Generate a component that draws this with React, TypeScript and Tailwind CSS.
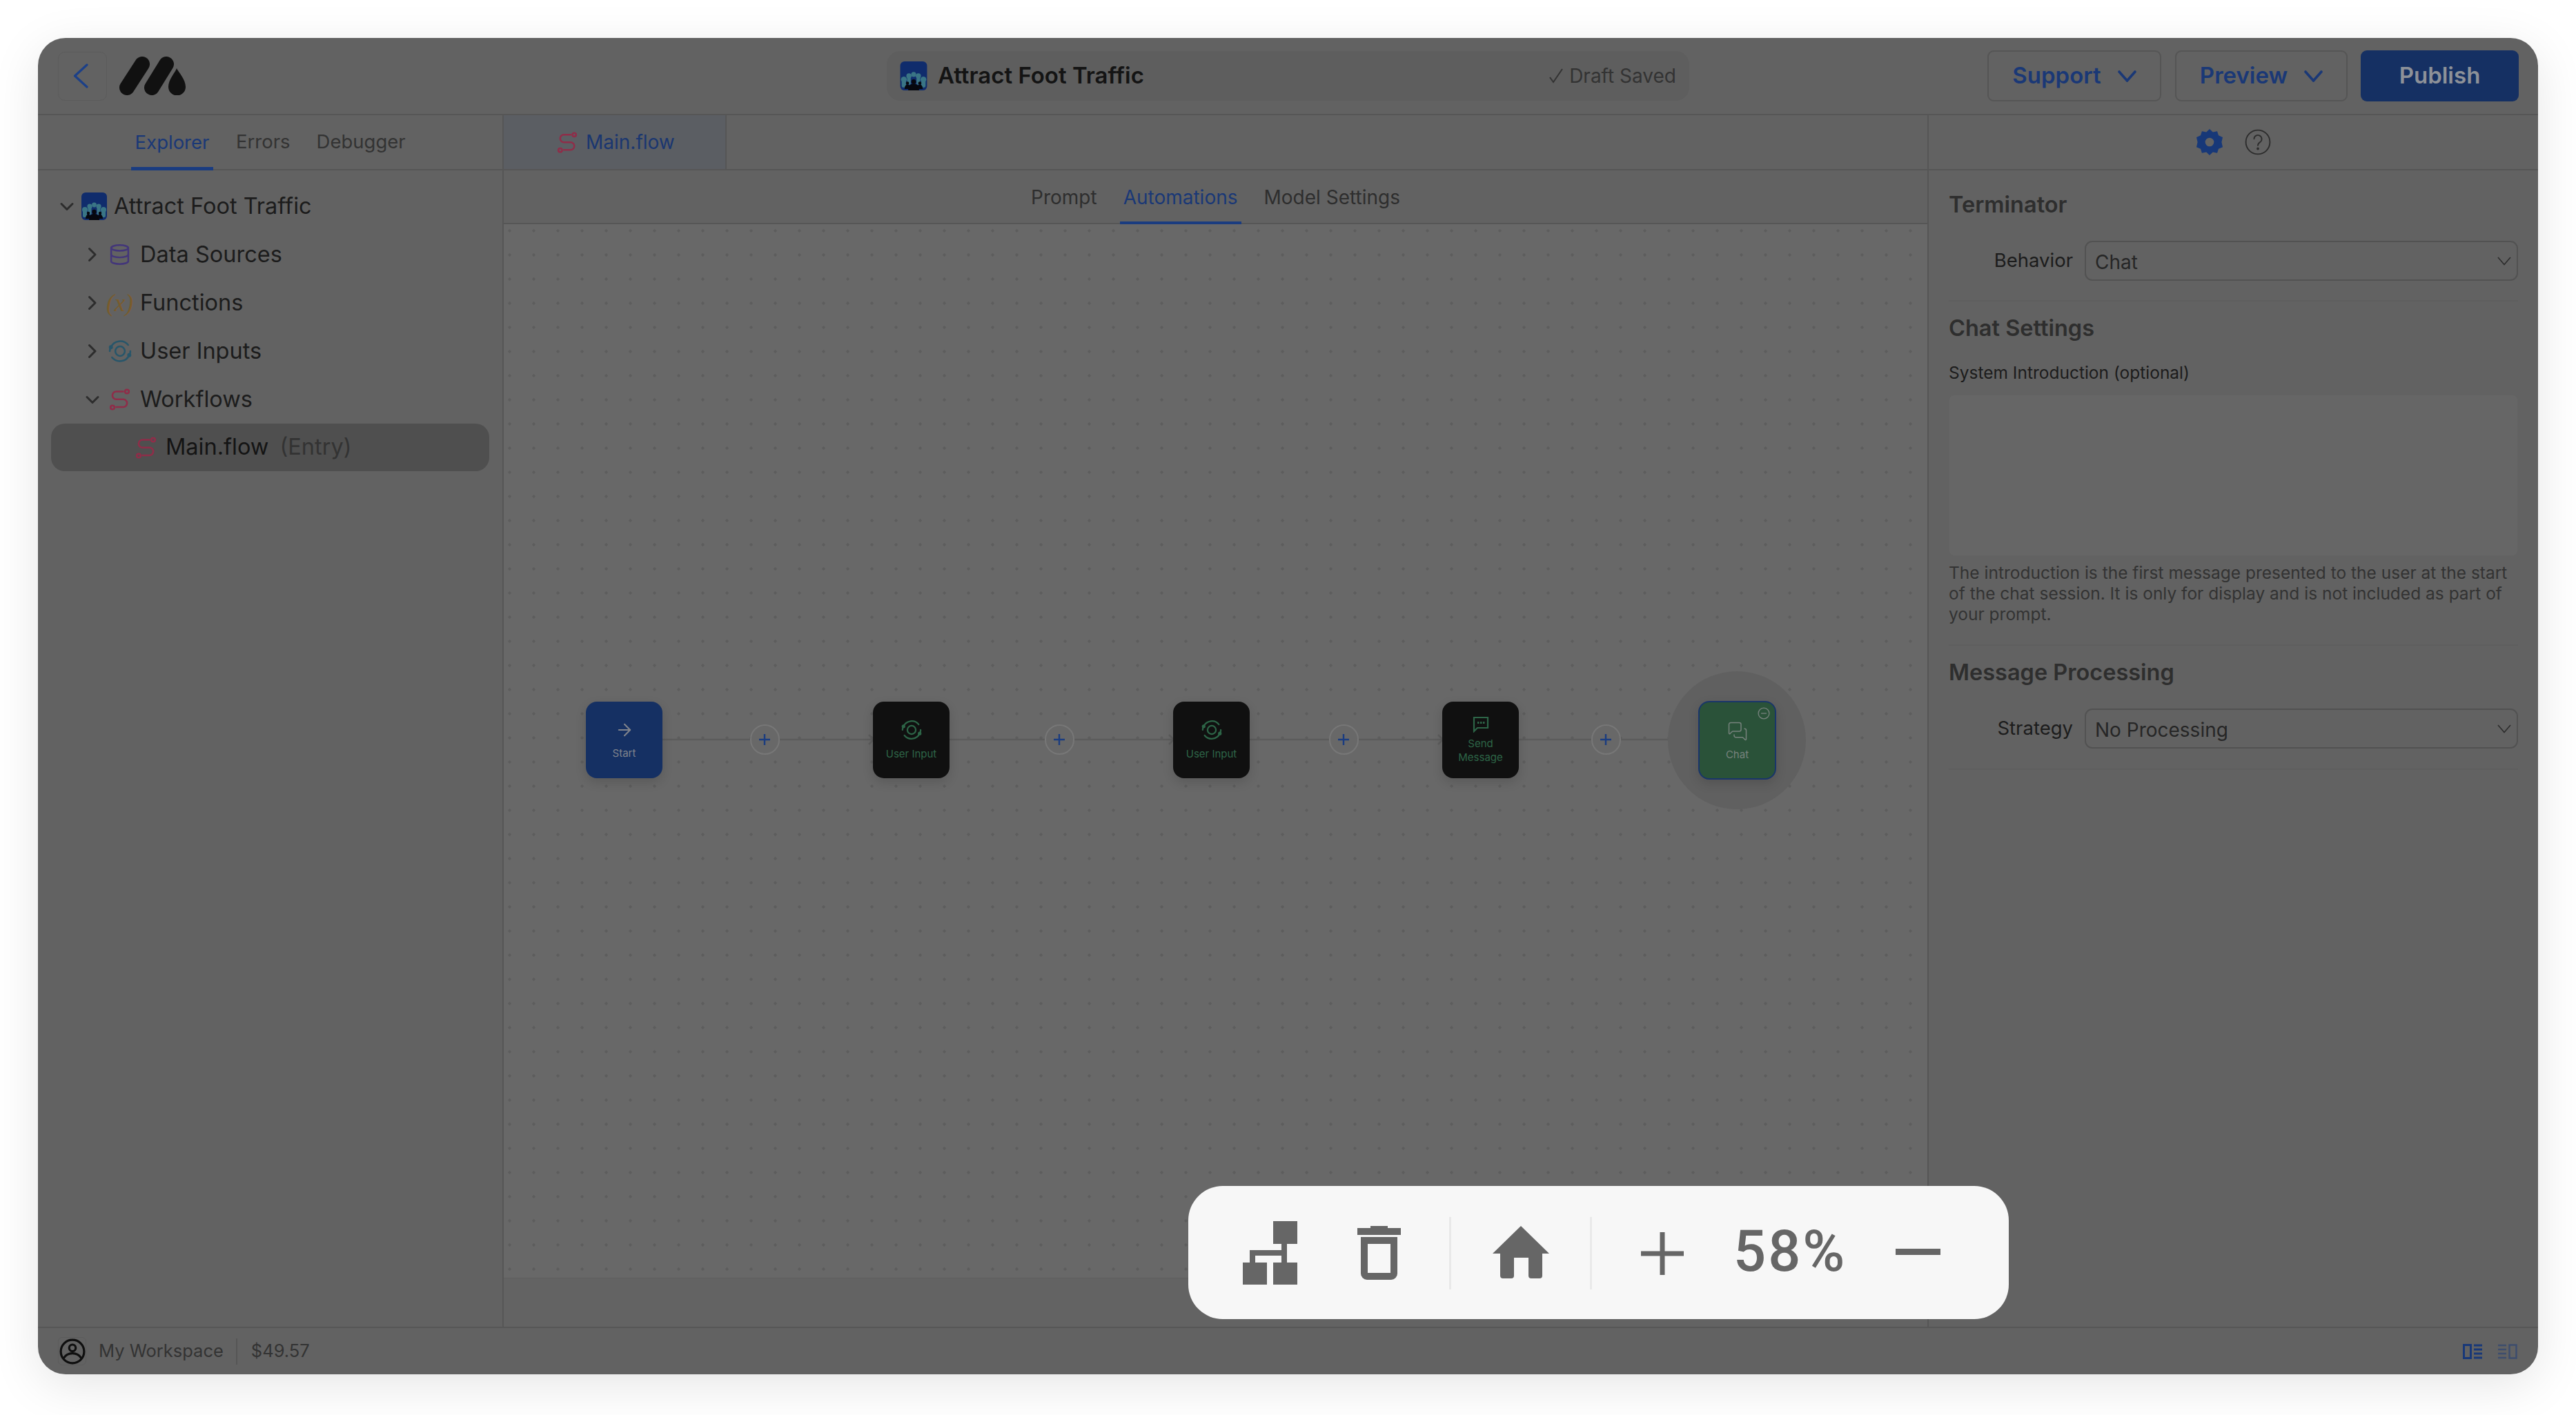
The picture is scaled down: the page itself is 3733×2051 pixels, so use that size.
import React from "react";
import { ArrowRight, Database, MessagesSquare } from "lucide-react";

const font = { fontFamily: "Inter, 'Liberation Sans', sans-serif" };

function Chevron({ dir, className = "" }: { dir: "down" | "right"; className?: string }) {
  return (
    <svg viewBox="0 0 32 32" fill="none" className={className} stroke="currentColor" strokeWidth="3" strokeLinecap="round" strokeLinejoin="round">
      {dir === "down" ? <path d="M8 12.500l8 8 8-8" /> : <path d="M11.500 7.500l8.500 8.500-8.500 8.500" />}
    </svg>
  );
}

function FlowIcon({ className = "" }: { className?: string }) {
  return (
    <svg viewBox="0 0 30 32" fill="none" className={className} stroke="currentColor" strokeWidth="2.600">
      <circle cx="25.500" cy="4.500" r="2.800" />
      <circle cx="4.500" cy="27.500" r="2.800" />
      <path d="M20 4.500H10a5.600 5.600 0 0 0 0 11.200h10a5.600 5.600 0 0 1 0 11.300H10" strokeLinecap="round" />
    </svg>
  );
}

function InputIcon({ className = "" }: { className?: string }) {
  return (
    <svg viewBox="0 0 32 32" fill="none" className={className} stroke="currentColor" strokeWidth="2.400" strokeLinecap="round">
      <circle cx="16" cy="16" r="6.500" />
      <path d="M3.500 10.500A14 14 0 0 1 27 7.500" />
      <path d="M28.500 21.500A14 14 0 0 1 5 24.500" />
      <path d="M2 16a14 14 0 0 1 .6-3.800" />
      <path d="M30 16a14 14 0 0 1-.6 3.800" />
      <circle cx="3.500" cy="10.500" r="1.600" fill="currentColor" />
      <circle cx="28.500" cy="21.500" r="1.600" fill="currentColor" />
    </svg>
  );
}

function AppIcon({ className = "" }: { className?: string }) {
  return (
    <svg viewBox="0 0 37 40" className={className}>
      <rect width="37" height="40" rx="6" fill="#102c6c" />
      <g fill="#3a7585">
        <circle cx="5" cy="25" r="4" />
        <circle cx="32" cy="25" r="4" />
        <circle cx="12" cy="20" r="3.600" />
        <circle cx="25" cy="20" r="3.600" />
        <circle cx="18.500" cy="18" r="3.400" />
        <rect x="2" y="26" width="6" height="10" rx="2" />
        <rect x="29" y="26" width="6" height="10" rx="2" />
        <rect x="9.500" y="22" width="5" height="10" />
        <rect x="22.500" y="22" width="5" height="10" />
      </g>
      <g fill="#06080f">
        <circle cx="18.500" cy="28" r="3.200" />
        <path d="M11 40c0-7 3-9 7.500-9s7.500 2 7.500 9z" />
        <circle cx="10" cy="30" r="2.200" />
        <circle cx="27" cy="30" r="2.200" />
        <path d="M6 38c0-4 2-6 4-6s4 2 4 6z" />
        <path d="M23 38c0-4 2-6 4-6s4 2 4 6z" />
      </g>
    </svg>
  );
}

function Logo() {
  return (
    <svg viewBox="0 0 96 56" className="w-[96px] h-[56px]" fill="#111">
      <line x1="11" y1="45" x2="33" y2="11" stroke="#111" strokeWidth="22" strokeLinecap="round" />
      <line x1="47" y1="45" x2="68" y2="11" stroke="#111" strokeWidth="22" strokeLinecap="round" />
      <path d="M83 17c3 6 13 16 13 27a12.500 12.500 0 0 1-25 0c0-11 10-21 12-27z" />
    </svg>
  );
}

function TreeRow({ indent, open, icon, textMargin = 11, children }: { indent: number; open?: boolean; icon: React.ReactNode; textMargin?: number; children: React.ReactNode }) {
  return (
    <div className="flex items-center h-[70px]" style={{ paddingLeft: indent }}>
      <Chevron dir={open ? "down" : "right"} className="w-[32px] h-[32px] text-[#2d2d2d] shrink-0" />
      <div className="w-[37px] ml-[5px] flex justify-center shrink-0">{icon}</div>
      <span className="text-[32.500px] leading-none text-[#1c1c1c] whitespace-nowrap" style={{ marginLeft: textMargin }}>
        {children}
      </span>
    </div>
  );
}

function Select({ label, value }: { label: string; value: string }) {
  return (
    <div className="flex items-center">
      <div className="w-[180px] text-right text-[27.500px] text-[#1c1c1c] whitespace-nowrap">{label}</div>
      <div className="ml-[17px] flex-1 h-[58px] rounded-[11px] border-2 border-[#525252] flex items-center pl-[13px] pr-[8px]">
        <span className="flex-1 text-[28px] text-[#262626] pt-[3px]">{value}</span>
        <svg viewBox="0 0 20 13" className="w-[20px] h-[13px]" fill="none" stroke="#2d2d2d" strokeWidth="1.600">
          <path d="M1 1l9 10.500L19 1" />
        </svg>
      </div>
    </div>
  );
}

function HeaderButton({ label }: { label: string }) {
  return (
    <div className="h-[74px] rounded-[9px] border-2 border-[#555555] flex items-center justify-center gap-[24px] text-[#1a3876] text-[33px] font-semibold">
      <span>{label}</span>
      <svg viewBox="0 0 27 17" className="w-[27px] h-[17px]" fill="none" stroke="currentColor" strokeWidth="3.600" strokeLinecap="round">
        <path d="M2 2l11.500 13L25 2" />
      </svg>
    </div>
  );
}

function FlowNode({ x, label, icon, kind }: { x: number; label: string[]; icon: React.ReactNode; kind: "start" | "dark" }) {
  const cls = kind === "start" ? "bg-[#153063] text-[#80848c]" : "bg-[#101010] text-[#2d6547]";
  return (
    <div
      className={`absolute top-[692px] w-[111px] h-[111px] rounded-[16px] shadow-[0_6px_16px_rgba(0,0,0,0.14)] flex flex-col items-center justify-center ${cls}`}
      style={{ left: x }}
    >
      {icon}
      <div className={`text-[15px] leading-[20px] text-center ${label.length > 1 ? "mt-[6px]" : "mt-[10px]"}`}>
        {label.map((l) => (
          <div key={l}>{l}</div>
        ))}
      </div>
    </div>
  );
}

function PlusCircle({ cx }: { cx: number }) {
  return (
    <div
      className="absolute top-[725px] w-[43px] h-[44px] rounded-full border-2 border-[#777777] bg-[#686868] flex items-center justify-center"
      style={{ left: cx - 21.5 }}
    >
      <svg viewBox="0 0 18 18" className="w-[18px] h-[18px]" stroke="#1a3c80" strokeWidth="2.400">
        <path d="M9 1v16M1 9h16" />
      </svg>
    </div>
  );
}

const edges: [number, number][] = [
  [230, 535],
  [646, 970],
  [1081, 1360],
  [1471, 1731],
];

export default function App() {
  return (
    <div className="w-[3733px] h-[2051px] bg-white p-[55px] overflow-hidden" style={font}>
      <div className="w-[3623px] h-[1937px] rounded-[40px] bg-[#626262] shadow-[0_16px_70px_rgba(0,0,0,0.10)] overflow-hidden flex flex-col">
        {/* header */}
        <div className="h-[112px] shrink-0 border-b-2 border-[#565656] flex items-center relative">
          <div className="ml-[29px] w-[71px] h-[71px] rounded-[10px] border border-[#5c5c5c] flex items-center pl-[21px]">
            <svg viewBox="0 0 22 36" className="w-[22px] h-[36px]" fill="none" stroke="#1c4088" strokeWidth="3.200" strokeLinecap="round" strokeLinejoin="round">
              <path d="M20 2L2.500 18 20 34" />
            </svg>
          </div>
          <div className="ml-[18px]">
            <Logo />
          </div>
          <div className="ml-[1016px] w-[1163px] h-[72px] rounded-[20px] bg-[#5e5e5e] flex items-center pl-[18px] pr-[19px]">
            <AppIcon className="w-[42px] h-[42px]" />
            <span className="ml-[14px] text-[33px] font-semibold text-[#141414]">Attract Foot Traffic</span>
            <div className="ml-auto flex items-center text-[28px] text-[#333333]">
              <svg viewBox="0 0 22 24" className="w-[22px] h-[24px] mr-[8px]" fill="none" stroke="#333333" strokeWidth="2">
                <path d="M2 14l5 7L20 2" />
              </svg>
              <span>Draft Saved</span>
            </div>
          </div>
          <div className="ml-[432px] flex items-center">
            <div className="w-[252px]">
              <HeaderButton label="Support" />
            </div>
            <div className="w-[250px] ml-[20px]">
              <HeaderButton label="Preview" />
            </div>
            <div className="w-[229px] ml-[19px] h-[74px] rounded-[9px] bg-[#153063] text-[#8d9198] text-[33px] font-semibold flex items-center justify-center">
              Publish
            </div>
          </div>
        </div>

        {/* body */}
        <div className="flex-1 flex min-h-0">
          {/* left */}
          <div className="w-[675px] shrink-0 border-r-2 border-[#565656] flex flex-col">
            <div className="h-[80px] border-b-2 border-[#565656] flex pl-[135px] text-[27.500px] text-[#333333]">
              <div className="w-[119px] h-[80px] border-b-[5px] border-[#1a3c80] text-[#1a3876] flex items-center justify-center pt-[5px] -mb-[2px]">Explorer</div>
              <div className="ml-[33px] h-[78px] flex items-center">Errors</div>
              <div className="ml-[38px] h-[78px] flex items-center">Debugger</div>
            </div>
            <div className="pt-[17px]">
              <TreeRow indent={26} open textMargin={10} icon={<AppIcon className="w-[37px] h-[40px]" />}>
                Attract Foot Traffic
              </TreeRow>
              <TreeRow indent={63} icon={<Database className="w-[33px] h-[36px] text-[#43367a]" strokeWidth={1.800} />}>
                Data Sources
              </TreeRow>
              <TreeRow
                indent={63}
                icon={
                  <span className="text-[35px] leading-none text-[#7a5c2c] italic" style={{ fontFamily: "'Liberation Serif', serif" }}>
                    (x)
                  </span>
                }
              >
                Functions
              </TreeRow>
              <TreeRow indent={63} icon={<InputIcon className="w-[34px] h-[34px] text-[#28566a]" />}>
                User Inputs
              </TreeRow>
              <TreeRow indent={63} open icon={<FlowIcon className="w-[31px] h-[32px] text-[#8f2d49]" />}>
                Workflows
              </TreeRow>
              <div className="mx-[19px] h-[69px] rounded-[20px] bg-[#4f4f4f] flex items-center pl-[122px]">
                <FlowIcon className="w-[31px] h-[32px] text-[#8f2d49]" />
                <span className="ml-[13px] text-[32.500px] leading-none text-[#141414]">Main.flow</span>
                <span className="ml-[16px] text-[32.500px] leading-none text-[#333333]">(Entry)</span>
              </div>
            </div>
          </div>

          {/* center */}
          <div className="flex-1 min-w-0 flex flex-col">
            <div className="h-[80px] shrink-0 border-b-2 border-[#565656] flex">
              <div className="w-[323px] bg-[#5b5e63] border-r-2 border-[#565656] flex items-center pl-[77px] gap-[12px] text-[#1a3670] text-[28px]">
                <FlowIcon className="w-[30px] h-[31px] text-[#8f2d49]" />
                <span>Main.flow</span>
              </div>
            </div>
            <div className="h-[78px] shrink-0 border-b-2 border-[#565656] flex justify-center text-[28px] text-[#2e2e2e]">
              <div className="flex">
                <div className="h-[76px] flex items-center pt-[2px]">Prompt</div>
                <div className="ml-[33px] h-[78px] px-[5px] flex items-center pt-[4px] border-b-[4px] border-[#1a3c80] text-[#1a3876]">Automations</div>
                <div className="ml-[33px] h-[76px] flex items-center pt-[2px]">Model Settings</div>
              </div>
            </div>
            <div className="flex-1 relative bg-[#686868] overflow-hidden bg-[radial-gradient(circle,#5d5d5d_1.900px,transparent_2.400px)] bg-[length:35px_35px] bg-[position:-9px_-8px]">
              <svg className="absolute left-0 top-0 w-[2063px] h-[1500px]" viewBox="0 0 2063 1500" fill="none">
                {edges.map(([a, b]) => (
                  <g key={a} stroke="#5c5c5c">
                    <line x1={a} y1="747" x2={b} y2="747" strokeWidth="2.500" />
                    <path d={`M${b - 6} 740l7 7-7 7`} strokeWidth="2.500" />
                  </g>
                ))}
              </svg>
              <div className="absolute left-[1687px] top-[648px] w-[200px] h-[200px] rounded-full bg-[#606060]" />
              <FlowNode x={119} kind="start" label={["Start"]} icon={<ArrowRight className="w-[28px] h-[28px]" strokeWidth={1.800} />} />
              <FlowNode x={535} kind="dark" label={["User Input"]} icon={<InputIcon className="w-[30px] h-[30px]" />} />
              <FlowNode x={970} kind="dark" label={["User Input"]} icon={<InputIcon className="w-[30px] h-[30px]" />} />
              <FlowNode
                x={1360}
                kind="dark"
                label={["Send", "Message"]}
                icon={
                  <svg viewBox="0 0 24 24" className="w-[24px] h-[24px]" fill="none" stroke="currentColor" strokeWidth="2.200">
                    <path d="M2 2h20v15H7l-5 5z" />
                    <path d="M7 9.500h2.500M11 9.500h2.500M15 9.500h2.500" strokeWidth="2.800" />
                  </svg>
                }
              />
              <div className="absolute left-[1731px] top-[691px] w-[113px] h-[114px] rounded-[16px] bg-[#2a5239] border-[2.500px] border-[#19356a] text-[#77827d] flex flex-col items-center justify-center shadow-[0_6px_16px_rgba(0,0,0,0.14)]">
                <svg viewBox="0 0 16 16" className="absolute right-[7px] top-[7px] w-[18px] h-[18px]" fill="none" stroke="#77827d" strokeWidth="1.200">
                  <circle cx="8" cy="8" r="7" />
                  <path d="M4.500 8h7" />
                </svg>
                <MessagesSquare className="w-[30px] h-[30px] mt-[2px]" strokeWidth={1.200} />
                <div className="text-[15px] leading-[20px] mt-[9px]">Chat</div>
              </div>
              <PlusCircle cx={378} />
              <PlusCircle cx={805} />
              <PlusCircle cx={1217} />
              <PlusCircle cx={1597} />
              <div className="absolute left-0 right-0 bottom-0 h-[71px] bg-[#636363] border-t border-[#5e5e5e]" />
            </div>
          </div>

          {/* right */}
          <div className="w-[885px] shrink-0 border-l-2 border-[#565656] flex flex-col">
            <div className="h-[80px] shrink-0 border-b-2 border-[#565656] flex items-center justify-center gap-[32px]">
              <svg viewBox="0 0 24 24" className="w-[38px] h-[38px]" fill="#173878">
                <path fillRule="evenodd" d="M12 0l3 2.800 4-.8 1.200 3.900L24 7.500 23 12l1 4.500-3.800 1.600L19 22l-4-.8L12 24l-3-2.800-4 .8-1.200-3.900L0 16.500 1 12 0 7.500l3.800-1.600L5 2l4 .8zM12 8a4 4 0 1 0 0 8 4 4 0 0 0 0-8z" />
              </svg>
              <svg viewBox="0 0 24 24" className="w-[38px] h-[38px]" fill="none" stroke="#2d2d2d" strokeWidth="1.200">
                <circle cx="12" cy="12" r="11" />
                <path d="M8.500 9a3.500 3.500 0 1 1 5.500 3c-1.300.9-2 1.500-2 3" strokeLinecap="round" />
                <circle cx="12" cy="18" r=".6" fill="#2d2d2d" />
              </svg>
            </div>
            <div className="px-[29px] pt-[30px]">
              <div className="h-[40px] flex items-center text-[32.500px] font-semibold text-[#2e2e2e]">Terminator</div>
              <div className="mt-[32px]">
                <Select label="Behavior" value="Chat" />
              </div>
              <div className="mt-[28px] border-t-2 border-[#5e5e5e]" />
              <div className="mt-[19px] h-[40px] flex items-center text-[32.500px] font-semibold text-[#2e2e2e]">Chat Settings</div>
              <div className="mt-[28px] h-[32px] flex items-center text-[24.500px] text-[#1c1c1c]">System Introduction (optional)</div>
              <div className="mt-[16px] h-[234px] rounded-[8px] bg-[#666666] border border-[#636363]" />
              <div className="mt-[9px] text-[24.500px] leading-[30px] text-[#333333]">
                The introduction is the first message presented to the user at the start of the chat session. It is only for display and is not included as part of your prompt.
              </div>
              <div className="mt-[29px] border-t-2 border-[#5e5e5e]" />
              <div className="mt-[19px] h-[40px] flex items-center text-[32.500px] font-semibold text-[#2e2e2e]">Message Processing</div>
              <div className="mt-[32px]">
                <Select label="Strategy" value="No Processing" />
              </div>
              <div className="mt-[29px] border-t-2 border-[#5e5e5e]" />
            </div>
          </div>
        </div>

        {/* footer */}
        <div className="h-[69px] shrink-0 border-t-2 border-[#565656] flex items-center pl-[29px] pr-[30px] text-[#333333] text-[25.500px]">
          <div className="w-[41px] h-[41px] rounded-[6px] border border-[#5c5c5c] flex items-center justify-center">
            <svg viewBox="0 0 36 36" className="w-[38px] h-[38px]" fill="none" stroke="#0f0f0f" strokeWidth="3">
              <circle cx="18" cy="18" r="16" />
              <circle cx="18" cy="13" r="4.500" />
              <path d="M6 27c3-5 7-6.500 12-6.500S27 22 30 27" />
            </svg>
          </div>
          <span className="ml-[18px]">My Workspace</span>
          <div className="ml-[18px] w-[2px] h-[38px] bg-[#565656]" />
          <span className="ml-[20px]">$49.57</span>
          <div className="ml-auto flex items-center gap-[23px]">
            <svg viewBox="0 0 28 22" className="w-[28px] h-[22px]" fill="none" stroke="#183878" strokeWidth="3">
              <rect x="1.500" y="1.500" width="10" height="19" />
              <path d="M16 2h12M16 8h12M16 14h12M16 20h12" />
            </svg>
            <svg viewBox="0 0 28 22" className="w-[28px] h-[22px] opacity-50" fill="none" stroke="#183878" strokeWidth="2.500">
              <rect x="16.500" y="1.500" width="10" height="19" />
              <path d="M0 2h12M0 8h12M0 14h12M0 20h12" />
            </svg>
          </div>
        </div>
      </div>

      {/* zoom toolbar */}
      <div className="fixed left-[1722px] top-[1719px] w-[1189px] h-[193px] rounded-[50px] bg-[#f7f7f7] flex items-center text-[#666666]">
        <svg viewBox="0 0 79 92" className="absolute left-[79px] top-[51px] w-[79px] h-[92px]" fill="#666666">
          <rect x="44" y="0" width="35" height="33" />
          <rect x="0" y="60" width="35" height="32" />
          <rect x="44" y="60" width="35" height="32" />
          <path d="M60 33V60M14 60V46H60" fill="none" stroke="#666666" strokeWidth="8" />
        </svg>
        <svg viewBox="0 0 63 79" className="absolute left-[245px] top-[58px] w-[63px] h-[79px]" fill="#666666">
          <rect x="0" y="3" width="63" height="10" />
          <rect x="19" y="0" width="25" height="4" />
          <path d="M10 21H53V69a4 4 0 0 1-4 4H14a4 4 0 0 1-4-4z" fill="none" stroke="#666666" strokeWidth="10" />
        </svg>
        <div className="absolute left-[378px] top-[45px] w-[3px] h-[105px] bg-[#e9e9e9]" />
        <svg viewBox="0 0 82 76" className="absolute left-[441px] top-[58px] w-[82px] h-[76px]" fill="#666666">
          <path d="M41 0L82 40H72V72a4 4 0 0 1-4 4H56a4 4 0 0 1-4-4V46H31V72a4 4 0 0 1-4 4H15a4 4 0 0 1-4-4V40H0z" />
        </svg>
        <div className="absolute left-[582px] top-[45px] w-[3px] h-[105px] bg-[#e9e9e9]" />
        <svg viewBox="0 0 62 62" className="absolute left-[656px] top-[67px] w-[62px] h-[62px]" stroke="#666666" strokeWidth="7">
          <path d="M31 0V62M0 31H62" />
        </svg>
        <span className="absolute left-[790px] top-[45px] text-[83px] leading-[100px] tracking-[3px] font-medium whitespace-nowrap" style={{ fontFamily: "Roboto, Inter, sans-serif" }}>58%</span>
        <div className="absolute left-[1025px] top-[91px] w-[65px] h-[9px] bg-[#666666]" />
      </div>
    </div>
  );
}
